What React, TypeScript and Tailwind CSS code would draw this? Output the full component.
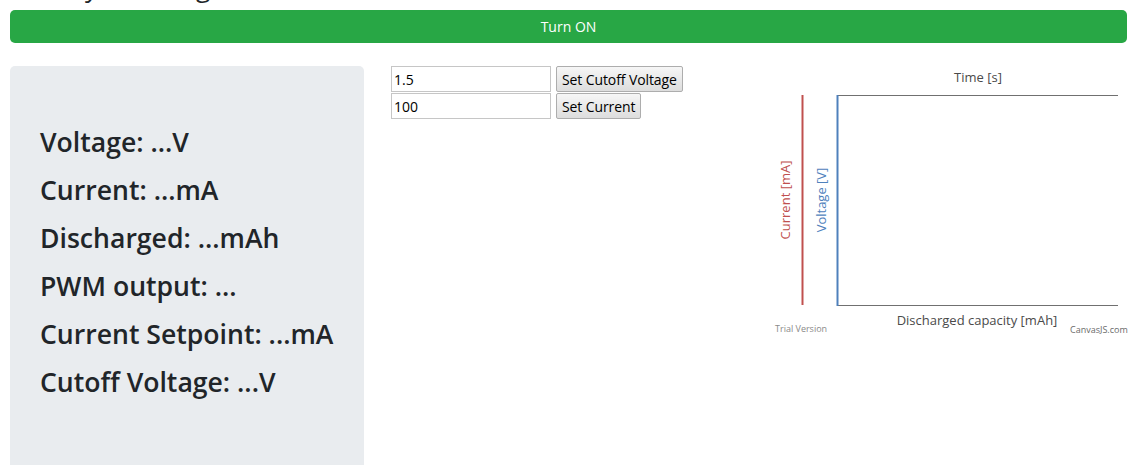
import React, { useState } from 'react';

const FONT = "font-['Open_Sans',sans-serif]";

// ── Live readings panel ────────────────────────────────────────────────────────
const READINGS = [
  'Voltage: ...V',
  'Current: ...mA',
  'Discharged: ...mAh',
  'PWM output: ...',
  'Current Setpoint: ...mA',
  'Cutoff Voltage: ...V',
];

const StatusPanel: React.FC = () => (
  <div className="w-[354px] h-[420px] shrink-0 bg-[#e9ecef] rounded-[5px] pl-[30px] pt-[52px]">
    {READINGS.map((line) => (
      <p key={line} className="text-[26.6px] leading-[48px] font-semibold text-[#212529] whitespace-nowrap">
        {line}
      </p>
    ))}
  </div>
);

// ── Setpoint inputs ────────────────────────────────────────────────────────────
const SetRow: React.FC<{ value: string; label: string; onChange: (v: string) => void }> = ({ value, label, onChange }) => (
  <div className="flex items-center gap-[5px]">
    <input
      value={value}
      onChange={(e) => onChange(e.target.value)}
      className="w-[160px] h-[26px] border border-[#c6c6c6] bg-white px-[2px] text-[14px] text-black outline-none"
    />
    <button className="h-[26px] px-[5px] border border-[#adadad] rounded-[2px] bg-gradient-to-b from-[#f6f6f6] to-[#dddddd] text-[14px] tracking-[-0.1px] text-black">
      {label}
    </button>
  </div>
);

const DischargeChart: React.FC = () => (
  <svg width="365" height="285" className="block overflow-visible" style={{ fontFamily: "'Open Sans', sans-serif" }}>
    <text x="223" y="22" textAnchor="middle" fontSize="13" fill="#4a4a4a">Time [s]</text>
    <line x1="82" y1="35.5" x2="363" y2="35.5" stroke="#707070" strokeWidth="1" />
    <line x1="82" y1="245.5" x2="363" y2="245.5" stroke="#707070" strokeWidth="1" />
    <line x1="47.5" y1="35" x2="47.5" y2="245" stroke="#c0504e" strokeWidth="2" />
    <line x1="82.5" y1="35" x2="82.5" y2="246" stroke="#4f81bc" strokeWidth="2" />
    <text transform="translate(35 140) rotate(-90)" textAnchor="middle" fontSize="13" fill="#c0504e">Current [mA]</text>
    <text transform="translate(71 140) rotate(-90)" textAnchor="middle" fontSize="13" fill="#4f81bc">Voltage [V]</text>
    <text x="222" y="265" textAnchor="middle" fontSize="13" fill="#4a4a4a">Discharged capacity [mAh]</text>
    <text x="20" y="272" fontSize="9" fill="#8a8a8a">Trial Version</text>
    <text x="315" y="273" fontSize="9" fill="#6a6a6a">CanvasJS.com</text>
  </svg>
);

export default function App() {
  const [cutoff, setCutoff] = useState('1.5');
  const [current, setCurrent] = useState('100');

  return (
    <div className={`${FONT} h-[465px] overflow-hidden bg-white px-[10px]`}>
      <h1 className="-mt-[26px] h-[26px] text-[26px] leading-none text-[#212529]">Battery Discharger</h1>

      <button className="mt-[10px] w-[1117px] h-[33px] rounded-[5px] bg-[#28a745] text-white text-[14px]">
        Turn ON
      </button>

      <div className="flex mt-[23px]">
        <StatusPanel />
        <div className="ml-[27px] flex-1 flex flex-col gap-[1px]">
          <SetRow value={cutoff} onChange={setCutoff} label="Set Cutoff Voltage" />
          <SetRow value={current} onChange={setCurrent} label="Set Current" />
        </div>
        <div className="-mt-[6px] shrink-0">
          <DischargeChart />
        </div>
      </div>
    </div>
  );
}
